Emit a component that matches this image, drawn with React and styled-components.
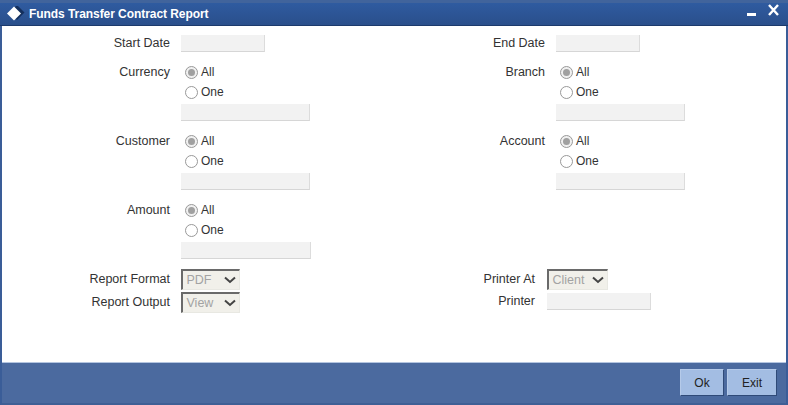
import React from 'react';
import styled, { createGlobalStyle } from 'styled-components';

const GlobalStyle = createGlobalStyle`
  html, body {
    margin: 0;
    padding: 0;
    background: #fff;
  }
  body {
    font-family: "Liberation Sans", Arial, sans-serif;
    font-size: 12px;
    color: #333;
  }
`;

const Window = styled.div`
  width: 788px;
  height: 405px;
  box-sizing: border-box;
  display: flex;
  flex-direction: column;
  background: #fff;
  border-left: 2px solid #3a5d98;
  border-right: 2px solid #3a5d98;
  border-bottom: 2px solid #3f5f95;
`;

const TitleBar = styled.div`
  height: 26px;
  box-sizing: border-box;
  margin: 0 -2px;
  padding: 0 9px 0 7px;
  display: flex;
  align-items: center;
  background: linear-gradient(#2f5ba0, #2a4f8b);
  border-top: 3px solid #41649c;
  border-bottom: 1px solid #1c3a6c;
  color: #fff;
`;

const TitleText = styled.span`
  flex: 1;
  margin-left: 4px;
  font-size: 12px;
  font-weight: bold;
  letter-spacing: -0.06px;
`;

const WindowButton = styled.svg`
  display: block;
  margin-left: ${(props) => props.$gap || 0}px;
  margin-bottom: 6px;
`;

const Form = styled.div`
  flex: 1;
  padding-top: 9px;
  display: grid;
  grid-template-columns: 375px 1fr;
  grid-auto-rows: min-content;
  row-gap: 10px;
`;

const Field = styled.div`
  display: flex;
  align-items: flex-start;
  gap: ${(props) => props.$gap || 11}px;
  margin-top: ${(props) => props.$top || 0}px;
`;

const Label = styled.div`
  width: ${(props) => props.$width || 168}px;
  flex: none;
  text-align: right;
  font-size: 12.5px;
  line-height: ${(props) => props.$height || 20}px;
`;

const Stack = styled.div`
  display: flex;
  flex-direction: column;
`;

const RadioRow = styled.div`
  display: flex;
  align-items: center;
  height: 20px;
  margin-left: 4px;
  gap: 3px;
`;

const RadioDot = styled.span`
  width: 13px;
  height: 13px;
  box-sizing: border-box;
  border-radius: 50%;
  border: 1px solid #999;
  background: ${(props) => (props.$checked ? '#f0f0f0' : '#fff')};
  display: flex;
  align-items: center;
  justify-content: center;

  &::after {
    content: '';
    width: 7px;
    height: 7px;
    border-radius: 50%;
    background: ${(props) => (props.$checked ? '#a0a0a0' : 'transparent')};
  }
`;

const TextBox = styled.div`
  width: ${(props) => props.$width}px;
  height: 17px;
  box-sizing: border-box;
  margin-top: ${(props) => props.$top || 0}px;
  background: #f2f2f2;
  border-right: 1px solid #dcdcdc;
  border-bottom: 1px solid #d6d6d6;
`;

const SelectBox = styled.div`
  width: ${(props) => props.$width}px;
  height: 21px;
  box-sizing: border-box;
  padding: 0 3px 0 3.5px;
  display: flex;
  align-items: center;
  justify-content: space-between;
  background: #f1f0ea;
  border-top: 2px solid #6a6a6a;
  border-left: 2px solid #6a6a6a;
  border-right: 1px solid #e8e8e2;
  border-bottom: 1px solid #e8e8e2;
  color: #a3a3a3;
  font-size: 12.5px;
`;

const Footer = styled.div`
  height: 41px;
  box-sizing: border-box;
  padding: 6px 9px 0 0;
  display: flex;
  justify-content: flex-end;
  gap: 3px;
  background: #4b6a9f;
  border-top: 1px solid #b4c5e0;
`;

const Button = styled.button`
  width: ${(props) => props.$width}px;
  height: 27px;
  padding: 0;
  background: #a3bde3;
  border: 1px solid;
  border-color: #b5cae9 #2f4a78 #2f4a78 #b5cae9;
  color: #222;
  font-family: inherit;
  font-size: 12px;
`;

const Chevron = () => (
  <svg width="12" height="8" viewBox="0 0 12 8">
    <path d="M1 1.5 L6 6 L11 1.5" fill="none" stroke="#444" strokeWidth="2" />
  </svg>
);

const Radios = ({ width = 129 }) => (
  <Stack>
    <RadioRow>
      <RadioDot $checked />
      All
    </RadioRow>
    <RadioRow>
      <RadioDot />
      One
    </RadioRow>
    <TextBox $width={width} $top={2} />
  </Stack>
);

const RadioField = ({ label, width }) => (
  <Field>
    <Label>{label}</Label>
    <Radios width={width} />
  </Field>
);

const App = () => (
  <>
    <GlobalStyle />
    <Window>
      <TitleBar>
        <svg width="18" height="16" viewBox="0 0 18 16">
          <path d="M10 -1 L17.5 6.5 L10 14 L2.5 6.5 Z" fill="#14305e" />
          <path d="M7 0.5 L14 7.5 L7 14.5 L0 7.5 Z" fill="#fff" />
        </svg>
        <TitleText>Funds Transfer Contract Report</TitleText>
        <WindowButton width="9" height="16" viewBox="0 0 9 16">
          <rect x="0" y="10" width="9" height="3" fill="#fff" />
        </WindowButton>
        <WindowButton $gap={12} width="11" height="16" viewBox="0 0 11 16">
          <path d="M1 2 L10 12 M10 2 L1 12" stroke="#fff" strokeWidth="2.4" fill="none" />
        </WindowButton>
      </TitleBar>

      <Form>
        <Field>
          <Label $height={17}>Start Date</Label>
          <TextBox $width={84} />
        </Field>
        <Field>
          <Label $height={17}>End Date</Label>
          <TextBox $width={84} />
        </Field>

        <RadioField label="Currency" />
        <RadioField label="Branch" />
        <RadioField label="Customer" />
        <RadioField label="Account" />
        <RadioField label="Amount" width={130} />
        <div />

        <Stack>
          <Field>
            <Label $height={21}>Report Format</Label>
            <SelectBox $width={59}>
              PDF
              <Chevron />
            </SelectBox>
          </Field>
          <Field $top={2}>
            <Label $height={21}>Report Output</Label>
            <SelectBox $width={59}>
              View
              <Chevron />
            </SelectBox>
          </Field>
        </Stack>
        <Stack>
          <Field $gap={12}>
            <Label $width={158} $height={21}>Printer At</Label>
            <SelectBox $width={61}>
              Client
              <Chevron />
            </SelectBox>
          </Field>
          <Field $gap={12} $top={3}>
            <Label $width={158} $height={17}>Printer</Label>
            <TextBox $width={104} />
          </Field>
        </Stack>
      </Form>

      <Footer>
        <Button $width={44}>Ok</Button>
        <Button $width={50}>Exit</Button>
      </Footer>
    </Window>
  </>
);

export default App;
